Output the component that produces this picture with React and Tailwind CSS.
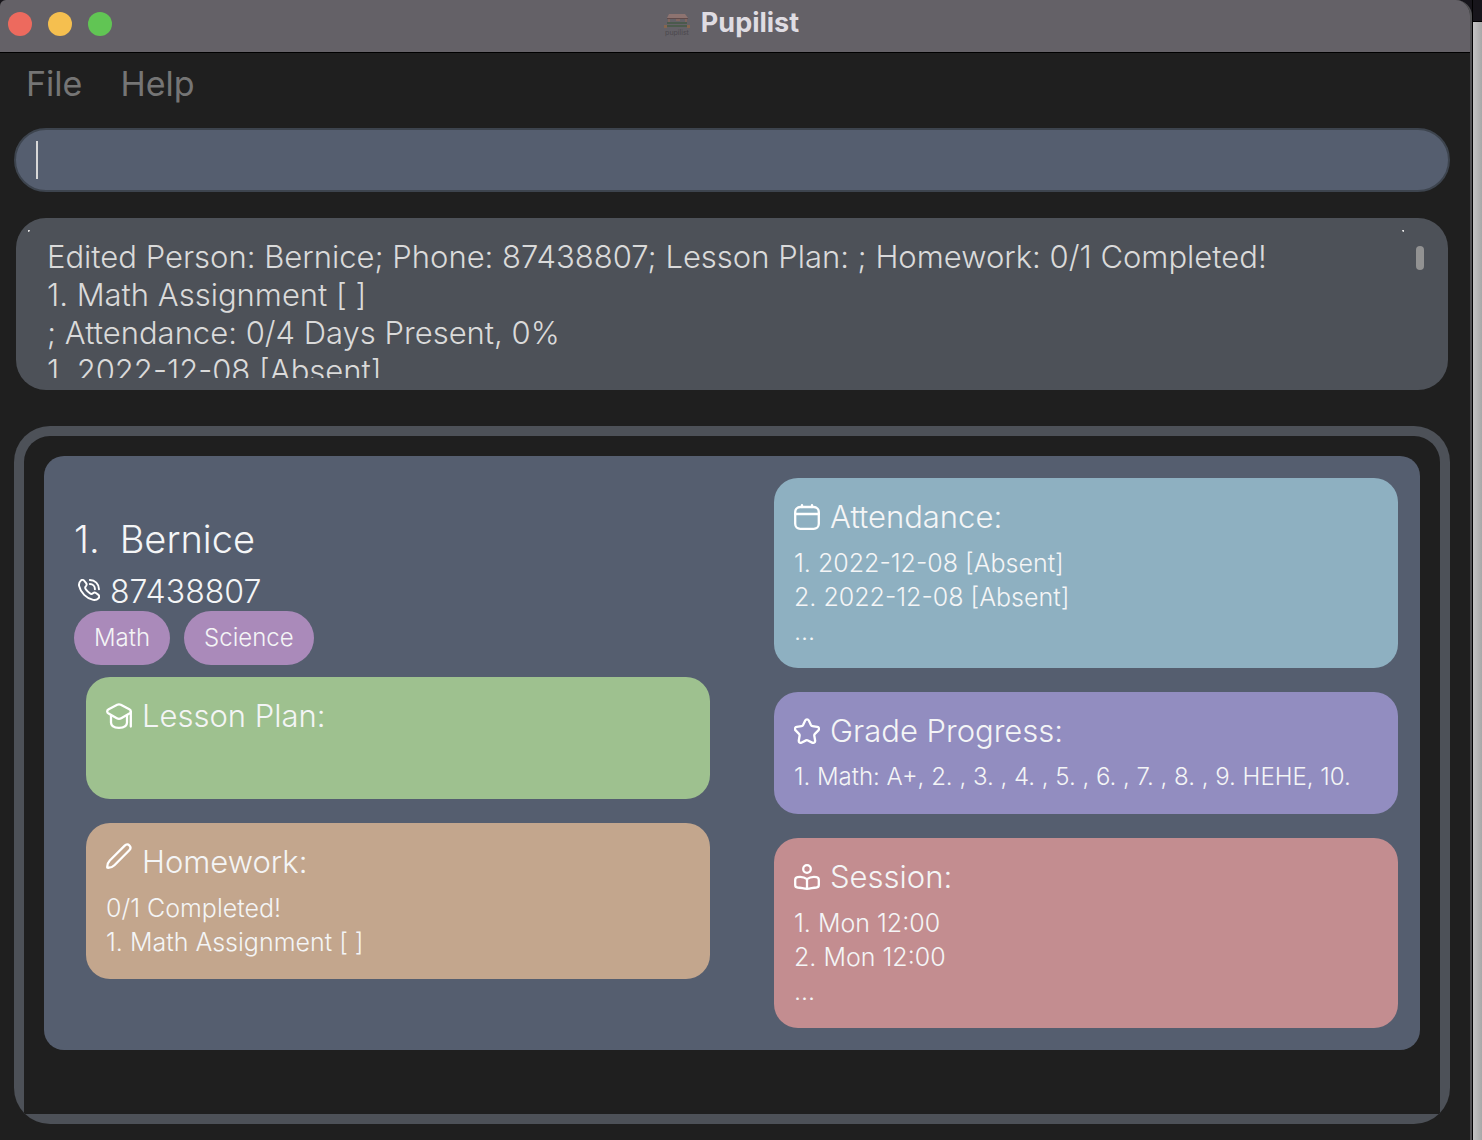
import React from "react";

function Icon({ className = "size-[26px]", children }) {
  return (
    <svg viewBox="0 0 26 26" className={className} fill="none" stroke="white" strokeWidth="2.3" strokeLinecap="round" strokeLinejoin="round" aria-hidden="true">
      {children}
    </svg>
  );
}

const CalendarIcon = () => (
  <Icon>
    <rect x="1.2" y="3" width="23.600" height="21.800" rx="5" />
    <path d="M1.200 10h23.600M8 1.200v1.800M18 1.200v1.800" />
  </Icon>
);

const StarIcon = () => (
  <Icon>
    <path d="M11.2 2.6c.8-1.6 2.8-1.6 3.6 0l2.1 4.5c.3.6.8 1 1.500 1.100l4.900.700c1.800.300 2.400 2.200 1.100 3.500l-3.500 3.500c-.5.500-.700 1.200-.600 1.800l.8 4.800c.3 1.800-1.400 2.900-3 2.100l-4.200-2.200c-.6-.3-1.300-.3-1.900 0l-4.200 2.200c-1.600.8-3.300-.3-3-2.100l.8-4.800c.1-.600-.1-1.300-.6-1.800l-3.400-3.500c-1.300-1.300-.7-3.200 1.100-3.500l4.900-.7c.7-.1 1.200-.5 1.500-1.100z" />
  </Icon>
);

const BookIcon = () => (
  <Icon>
    <circle cx="13" cy="5" r="3.800" />
    <path d="M13 15.200v9.600M13 15.200C10.500 13.200 7 12.600 3.600 13.100 2 13.300 1.200 14.300 1.200 16v5c0 1.600.8 2.400 2.400 2.500 3.300.1 6.400 1.300 9.400 1.300s6.100-1.200 9.400-1.300c1.600-.1 2.400-.9 2.400-2.500v-5c0-1.700-.8-2.700-2.400-2.900-3.400-.5-6.900.1-9.400 2.100z" />
  </Icon>
);

const CapIcon = () => (
  <Icon>
    <path d="M11.200 1.800 2.700 6.200C.7 7.300.7 9.400 2.600 10.600l8.200 4.700c1.400.8 3 .8 4.400 0l8.200-4.700c1.900-1.200 1.900-3.300-.1-4.400l-8.500-4.400c-1.200-.6-2.400-.6-3.600 0z" />
    <path d="M5 12.200v7.300c0 3.500 3.400 5.300 8 5.300s8-1.800 8-5.300v-7.300M24.800 9v14.500" />
  </Icon>
);

const PencilIcon = () => (
  <Icon className="mb-3 size-[26px]">
    <path d="M1.300 24.700c-.2-2.900.4-5.100 2.500-7.200L18.700 2.600c1.500-1.500 3.400-1.500 4.700-.1s1.400 3.300-.1 4.800L8.400 22.200c-2 2-4.200 2.700-7.100 2.500z" />
  </Icon>
);

const PhoneIcon = () => (
  <Icon className="mb-1 size-[22px]">
    <path d="M7.500 2.300C6.400.8 4.600.6 3.300 1.900 1.500 3.600.8 5.600 1.300 8.200c.8 3.900 3 7.500 6 10.500s6.700 5.200 10.600 6c2.600.5 4.600-.2 6.300-2 1.300-1.300 1.100-3.100-.4-4.200l-2.600-1.900c-1.200-.9-2.400-.8-3.500.2-1.300 1.300-2.300 1.200-3.700.1-1.700-1.300-3.300-2.900-4.700-4.700-1.100-1.400-1.200-2.500.1-3.800 1-1.100 1.100-2.300.2-3.500z" />
    <path d="M14 1.200c6 0 10.800 4.800 10.800 10.800M14 6c3.400 0 6 2.600 6 6" />
  </Icon>
);

function InfoCard({ icon, title, color, lines, small = false }) {
  return (
    <section className={"rounded-[24px] px-5 pt-[19px] pb-5 " + color}>
      <h3 className="flex h-10 items-center gap-[10px] text-[31px] leading-10">
        {icon}
        {title}
      </h3>
      <div className={"mt-[9px] min-h-[34px] leading-[34px] whitespace-nowrap " + (small ? "text-[24px]" : "text-[25px]")}>
        {lines.map((line, i) => (
          <p key={i}>{line}</p>
        ))}
      </div>
    </section>
  );
}

function Logo() {
  return (
    <svg viewBox="0 0 28 28" className="size-7" aria-hidden="true">
      <path d="M6 5h16l3 4H4z" fill="#8d7370" />
      <path d="M4 9h21v1H4z" fill="#5f4a4a" />
      <path d="M5 10h2v4H5zM22 10h2v4h-2zM13 10h4v2h-4z" fill="#80655f" />
      <path d="M4 13h20v2H4z" fill="#4b5a4d" />
      <path d="M3 16h22v2H3z" fill="#4c5b4c" />
      <path d="M1 16h3v3H1zM24 16h3v3h-3z" fill="#86664f" />
      <text x="14" y="26" textAnchor="middle" fontSize="7" fontWeight="400" fill="#4b484d" fontFamily="Inter, sans-serif">pupilist</text>
    </svg>
  );
}

export default function App() {
  return (
    <div className="flex min-h-screen bg-[#b4b4b4] font-['Inter',sans-serif] font-light">
      <div className="flex min-w-0 flex-1 flex-col bg-[#17151b]">
        <div className="flex flex-1 flex-col overflow-hidden rounded-tl-[6px] rounded-tr-[16px] border-r-2 border-[#515153] bg-[#1f1f1f]">
          <header className="grid h-[53px] grid-cols-[1fr_auto_1fr] items-center border-b border-black bg-[#646167] px-2 pb-1">
            <div className="flex gap-4">
              <button aria-label="Close" className="size-6 rounded-full bg-[#ed6a5e]" />
              <button aria-label="Minimize" className="size-6 rounded-full bg-[#f5bf4f]" />
              <button aria-label="Zoom" className="size-6 rounded-full bg-[#61c554]" />
            </div>
            <h1 className="mr-2 mb-[2px] flex items-center gap-[10px] text-[27px] leading-8 font-bold text-[#dfdce2]">
              <Logo />
              Pupilist
            </h1>
          </header>

          <nav className="flex h-[75px] gap-[38px] px-[26px] pt-[11px] text-[34px] leading-10 font-normal text-[#757575]">
            <button className="h-10">File</button>
            <button className="h-10">Help</button>
          </nav>

          <main className="flex flex-1 flex-col pr-5 pb-4 pl-[14px]">
            <div className="flex h-16 items-center rounded-[32px] border-2 border-[#3d444e] bg-[#555e6f] pl-5">
              <span className="h-[38px] w-[2px] bg-[#d8d8d8]" />
              <input aria-label="Command" className="h-full min-w-0 flex-1 bg-transparent text-[31px] text-white outline-none" />
            </div>

            <div className="mx-[2px] mt-[26px] flex justify-between rounded-[30px] bg-[#4d5158] py-3 pr-6 pl-3">
              <span className="h-[2px] w-[2px] rounded-br-full bg-[#e6e6e6]" />
              <div className="mt-2 ml-[17px] h-[140px] flex-1 overflow-hidden text-[31px] leading-[38px] text-[#dadada]">
                <p>Edited Person: Bernice; Phone: 87438807; Lesson Plan: ; Homework: 0/1 Completed!</p>
                <p>1. Math Assignment [ ]</p>
                <p>; Attendance: 0/4 Days Present, 0%</p>
                <p>1. 2022-12-08 [Absent]</p>
              </div>
              <span className="mr-3 h-[2px] w-[2px] rounded-bl-full bg-[#e6e6e6]" />
              <span className="mt-4 h-6 w-2 rounded-full bg-[#929292]" />
            </div>

            <div className="mt-9 flex flex-1 flex-col overflow-hidden rounded-[36px] bg-[#4d5158] p-[10px]">
              <div className="flex-1 rounded-t-[26px] bg-[#1f1f1f] p-5">
                <article className="grid grid-cols-2 gap-16 rounded-[20px] bg-[#555e6f] py-[22px] pr-[22px] pl-[42px] text-[#f4f5f6]">
                  <div className="flex min-w-0 flex-col">
                    <div className="mt-[35px] -ml-3">
                      <h2 className="flex gap-5 text-[38px] leading-[52px]">
                        <span>1.</span>
                        <span>Bernice</span>
                      </h2>
                      <p className="flex h-[46px] items-center gap-[10px] pt-2 pl-1 text-[32px]">
                        <PhoneIcon />
                        87438807
                      </p>
                      <div className="flex gap-[14px] text-[24px] leading-[54px]">
                        <span className="rounded-[27px] bg-[#aa8aba] px-5">Math</span>
                        <span className="rounded-[27px] bg-[#aa8aba] px-5">Science</span>
                      </div>
                    </div>
                    <div className="mt-3 flex flex-col gap-6">
                      <InfoCard icon={<CapIcon />} title="Lesson Plan:" color="bg-[#9ec18f]" lines={[]} />
                      <InfoCard icon={<PencilIcon />} title="Homework:" color="bg-[#c3a68d]" lines={["0/1 Completed!", "1. Math Assignment [ ]"]} />
                    </div>
                  </div>
                  <div className="flex min-w-0 flex-col gap-6">
                    <InfoCard icon={<CalendarIcon />} title="Attendance:" color="bg-[#8eb0c1]" lines={["1. 2022-12-08 [Absent]", "2. 2022-12-08 [Absent]", "..."]} />
                    <InfoCard icon={<StarIcon />} title="Grade Progress:" color="bg-[#928dc0]" small lines={["1. Math: A+, 2. , 3. , 4. , 5. , 6. , 7. , 8. , 9. HEHE, 10."]} />
                    <InfoCard icon={<BookIcon />} title="Session:" color="bg-[#c38d90]" lines={["1. Mon 12:00", "2. Mon 12:00", "..."]} />
                  </div>
                </article>
              </div>
            </div>
          </main>
        </div>
      </div>
      <div className="w-[10px] border-l border-black bg-gradient-to-r from-[#c4c4c4] to-[#a8a8a8]">
        <div className="h-[22px] border-b border-black bg-[#17151b]" />
      </div>
    </div>
  );
}
